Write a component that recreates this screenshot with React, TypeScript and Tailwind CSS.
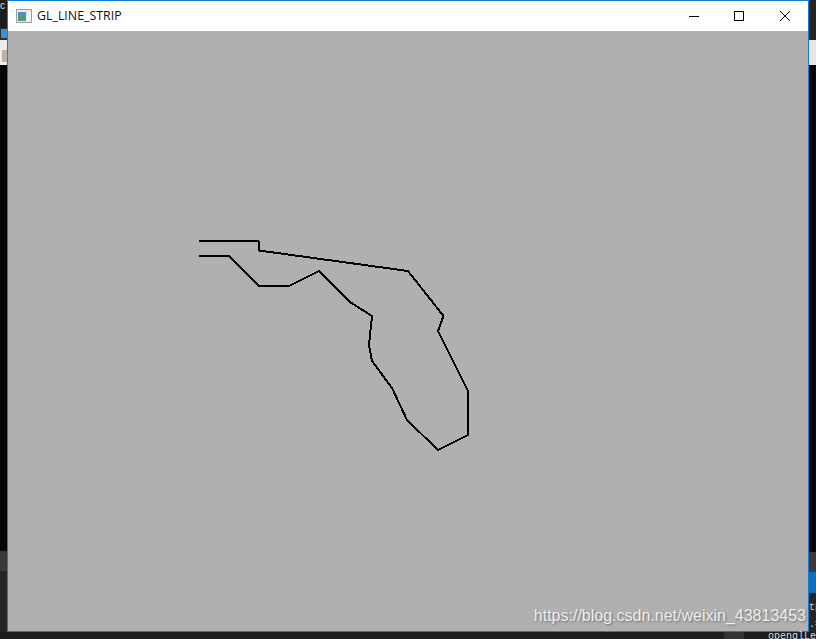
const outline = [
  [199, 241], [258.5, 241], [259, 250.5], [408, 271], [443.5, 316], [438, 331], [468, 391],
  [468, 435], [438, 450], [407, 420], [392, 388], [372, 361], [369, 345], [372, 316],
  [350, 302], [319, 271], [289, 286], [259, 286], [229, 256], [199, 256],
];

// canvas starts at x=8, y=31 in the screenshot
const points = outline.map(([x, y]) => `${x - 8},${y - 31}`).join(' ');

function WindowIcon() {
  return (
    <svg width="16" height="14" viewBox="0 0 16 14">
      <rect x="0.5" y="0.5" width="15" height="13" fill="#e8e8e8" stroke="#a0a0a0" />
      <rect x="2" y="3" width="8" height="9" fill="#4f9a7c" />
      <rect x="2" y="3" width="8" height="4" fill="#5a8fb8" />
      <rect x="11" y="3" width="3" height="9" fill="#f6f6f6" />
    </svg>
  );
}

function Minimize() {
  return (
    <svg width="10" height="10" viewBox="0 0 10 10" className="ml-[2px]" shapeRendering="crispEdges">
      <path d="M0 5.5H10" stroke="#000000" />
    </svg>
  );
}

function Maximize() {
  return (
    <svg width="10" height="10" viewBox="0 0 10 10" shapeRendering="crispEdges">
      <rect x="0.5" y="0.5" width="9" height="9" fill="none" stroke="#000000" />
    </svg>
  );
}

function Close() {
  return (
    <svg width="10" height="10" viewBox="0 0 10 10">
      <path d="M0 0L10 10M10 0L0 10" stroke="#000000" strokeWidth="1" />
    </svg>
  );
}

export default function App() {
  return (
    <div className="flex h-[639px] w-[816px] flex-col overflow-hidden bg-[#1e1e1e] font-['Liberation_Sans',sans-serif]">
      <div className="flex h-[632px]">
        <div className="flex w-[7px] flex-col">
          <div className="h-[28px] bg-[#1c1c1c] pt-px text-[10px] leading-[10px] text-[#dddddd]">c</div>
          <div className="h-[12px] bg-[#2d2d30] pl-px pt-px">
            <div className="h-[9px] w-[6px] bg-[#3f8fd8]" />
          </div>
          <div className="h-[25px] bg-[#ececec] pl-[2px] pt-[10px]">
            <div className="h-[12px] w-[5px] border-l-2 border-[#d9a878] bg-[#b5b5b5]" />
          </div>
          <div className="h-[486px] bg-[#050505]" />
          <div className="h-[20px] bg-[#3a3a3c]" />
          <div className="flex-1 bg-[#252526]" />
        </div>

        <div className="flex w-[802px] flex-col border border-[#0f7fd6]">
          <div className="flex h-[30px] items-center bg-white">
            <div className="ml-[8px] flex h-[14px] w-[16px]">
              <WindowIcon />
            </div>
            <span className="ml-[5px] font-['Open_Sans',sans-serif] text-[12.4px] text-[#111111]">GL_LINE_STRIP</span>
            <div className="ml-auto flex h-full items-center">
              <div className="flex w-[46px] justify-center">
                <Minimize />
              </div>
              <div className="flex w-[46px] justify-center">
                <Maximize />
              </div>
              <div className="flex w-[46px] justify-center">
                <Close />
              </div>
            </div>
          </div>
          <div className="relative flex-1 bg-[#b0b0b0]">
            <svg width="800" height="600" className="block" shapeRendering="crispEdges">
              <polyline points={points} fill="none" stroke="#000000" strokeWidth="2" />
            </svg>
            <span className="absolute bottom-[3px] right-[2px] whitespace-nowrap text-[16px] text-[#eeeeee] [text-shadow:1px_1px_2px_#6f6f6f]">
              https://blog.csdn.net/weixin_43813453
            </span>
          </div>
        </div>

        <div className="flex flex-1 flex-col">
          <div className="flex h-[40px] items-center justify-end bg-[#252526]">
            <div className="mt-[10px] h-[7px] w-[5px] rounded-l-full bg-[#4a90d9]" />
          </div>
          <div className="h-[25px] bg-[#e6e6e6]" />
          <div className="h-[487px] bg-[#050505]" />
          <div className="h-[20px] bg-[#3a3a3c]" />
          <div className="h-[21px] bg-[#0e6fc0]" />
          <div className="flex-1 overflow-hidden bg-[#252526] pt-[9px] font-['Liberation_Mono',monospace] text-[10px] leading-[12px] text-[#cccccc]">
            <div>tp</div>
            <div className="mt-[5px]">.=</div>
          </div>
        </div>
      </div>

      <div className="flex h-[7px] justify-end bg-[#1e1e1e]">
        <div className="mr-[24px] h-full w-[20px] bg-[#333337]" />
        <span className="whitespace-nowrap font-['Liberation_Mono',monospace] text-[10px] leading-[10px] text-[#dddddd]">
          openglLe
        </span>
      </div>
    </div>
  );
}
